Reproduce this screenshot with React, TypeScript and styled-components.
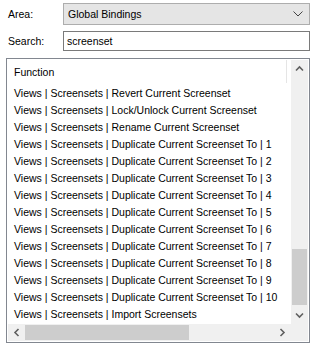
import React from "react";
import styled, { createGlobalStyle } from "styled-components";

const GlobalStyle = createGlobalStyle`
  html, body { margin: 0; padding: 0; background: #ffffff; }
  body { font-family: "Liberation Sans", Arial, sans-serif; font-size: 10.5px; color: #000; }
`;

const Page = styled.div`
  width: 315px;
  height: 346px;
  box-sizing: border-box;
  padding: 3px 5px 0 6px;
  display: flex;
  flex-direction: column;
`;

const FieldRow = styled.div<{ $h: number; $mb: number }>`
  display: grid;
  grid-template-columns: 57px 1fr;
  align-items: center;
  height: ${(p) => p.$h}px;
  margin-bottom: ${(p) => p.$mb}px;
`;

const Label = styled.span`
  padding-left: 2px;
  font-size: 10.5px;
`;

const Combo = styled.div`
  height: 22px;
  box-sizing: border-box;
  border: 1px solid #adadad;
  background: #e5e5e5;
  display: flex;
  align-items: center;
  justify-content: space-between;
  padding: 0 6px 0 4px;
`;

const TextBox = styled.div`
  height: 20px;
  box-sizing: border-box;
  border: 1px solid #7a7a7a;
  background: #fff;
  display: flex;
  align-items: center;
  padding-left: 3px;
`;

const ListBox = styled.div`
  width: 304px;
  height: 285px;
  box-sizing: border-box;
  border: 1px solid #828790;
  padding: 1px;
  background: #fff;
  display: grid;
  grid-template-columns: 1fr 17px;
  grid-template-rows: 1fr 17px;
`;

const Content = styled.div`
  overflow: hidden;
  display: flex;
  flex-direction: column;
`;

const Header = styled.div`
  height: 24px;
  flex: none;
  display: flex;
  align-items: center;
  position: relative;
  padding-left: 6px;
  &::after {
    content: "";
    position: absolute;
    right: 4px;
    top: 0;
    bottom: 1px;
    width: 1px;
    background: #e5e5e5;
  }
`;

const Row = styled.div`
  height: 17px;
  flex: none;
  display: flex;
  align-items: center;
  padding-left: 6px;
  white-space: nowrap;
`;

const VScroll = styled.div`
  background: #f0f0f0;
  display: flex;
  flex-direction: column;
`;

const HScroll = styled.div`
  background: #f0f0f0;
  display: flex;
`;

const Corner = styled.div`
  background: #f0f0f0;
`;

const ArrowBox = styled.div`
  width: 17px;
  height: 17px;
  flex: none;
  display: flex;
  align-items: center;
  justify-content: center;
`;

const VTrack = styled.div`
  flex: 1;
  display: flex;
  flex-direction: column;
  padding: 0 1px;
`;

const HTrack = styled.div`
  flex: 1;
  display: flex;
  padding: 1px 0;
`;

const Thumb = styled.div`
  background: #cdcdcd;
  flex: none;
`;

const Chevron = ({ dir, color = "#606060" }: { dir: "up" | "down" | "left" | "right"; color?: string }) => {
  const rot = { up: 180, down: 0, left: 90, right: -90 }[dir];
  return (
    <svg width="9" height="9" viewBox="0 0 9 9" style={{ transform: `rotate(${rot}deg)` }}>
      <path d="M1 2.5 L4.5 6 L8 2.5" fill="none" stroke={color} strokeWidth="1.6" />
    </svg>
  );
};

const rows = [
  "Views | Screensets | Revert Current Screenset",
  "Views | Screensets | Lock/Unlock Current Screenset",
  "Views | Screensets | Rename Current Screenset",
  ...Array.from({ length: 10 }, (_, i) => `Views | Screensets | Duplicate Current Screenset To | ${i + 1}`),
  "Views | Screensets | Import Screensets",
];

export default function App() {
  return (
    <>
      <GlobalStyle />
      <Page>
        <FieldRow $h={22} $mb={6}>
          <Label>Area:</Label>
          <Combo>
            <span>Global Bindings</span>
            <svg width="10" height="6" viewBox="0 0 10 6">
              <path d="M0.5 0.5 L5 5 L9.5 0.5" fill="none" stroke="#444" strokeWidth="1" />
            </svg>
          </Combo>
        </FieldRow>
        <FieldRow $h={20} $mb={7}>
          <Label>Search:</Label>
          <TextBox>screenset</TextBox>
        </FieldRow>
        <ListBox>
          <Content>
            <Header>Function</Header>
            {rows.map((r) => (
              <Row key={r}>{r}</Row>
            ))}
          </Content>
          <VScroll>
            <ArrowBox>
              <Chevron dir="up" />
            </ArrowBox>
            <VTrack>
              <div style={{ height: 172 }} />
              <Thumb style={{ height: 56 }} />
            </VTrack>
            <ArrowBox>
              <Chevron dir="down" />
            </ArrowBox>
          </VScroll>
          <HScroll>
            <ArrowBox>
              <Chevron dir="left" />
            </ArrowBox>
            <HTrack>
              <Thumb style={{ width: 164 }} />
            </HTrack>
            <ArrowBox>
              <Chevron dir="right" />
            </ArrowBox>
          </HScroll>
          <Corner />
        </ListBox>
      </Page>
    </>
  );
}
